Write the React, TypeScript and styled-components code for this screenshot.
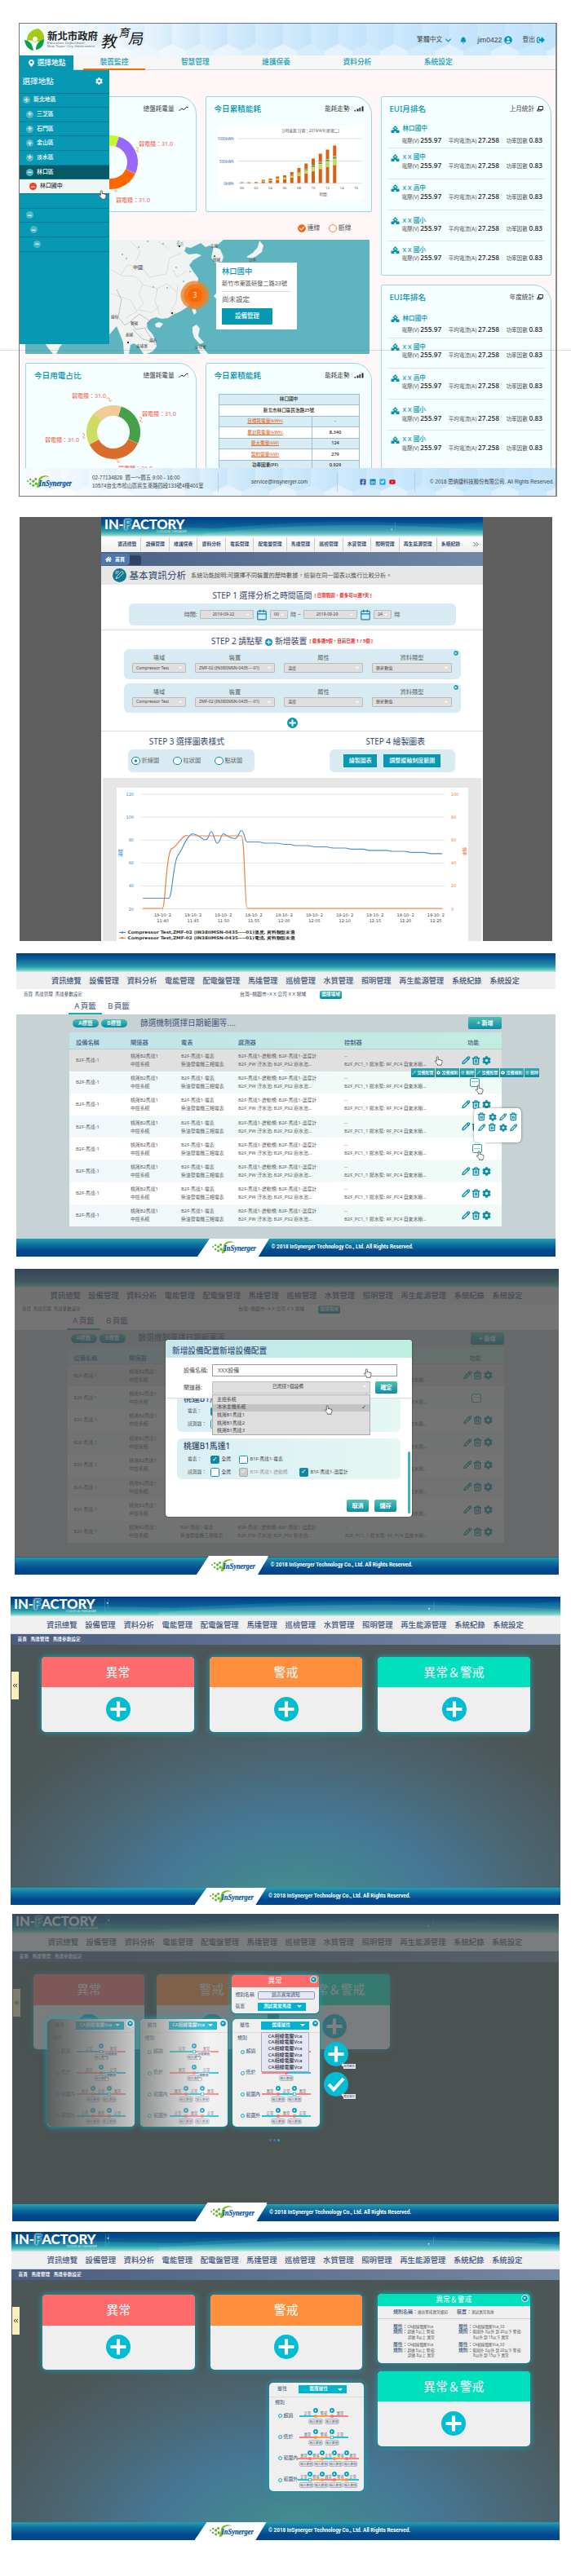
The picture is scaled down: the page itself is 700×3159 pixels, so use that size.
import React from 'react';
import styled, { createGlobalStyle, css } from 'styled-components';
import { FaCog, FaBell, FaUserCircle, FaFacebookSquare, FaLinkedin, FaTwitterSquare, FaYoutube, FaHome, FaCheckCircle, FaMapMarkerAlt, FaSignOutAlt } from 'react-icons/fa';
import { Pencil, Trash2, ChevronDown, ChevronsRight, ChevronsLeft, Calendar } from 'lucide-react';

const sans = '"Noto Sans", "Noto Sans CJK TC", sans-serif';

const Global = createGlobalStyle`
  *{box-sizing:border-box}
  html,body{margin:0;background:#fff}
  body{font-family:${sans};line-height:1;color:#444}
`;

const Page = styled.main`
  position:relative;width:700px;height:3159px;overflow:hidden;padding-top:28px;
`;
const PageRule = styled.div`position:absolute;left:0;top:429px;width:700px;height:1px;background:rgba(120,120,120,.25);`;

const Frame = styled.section<{ $x: number; $w: number; $h: number; $mt: number }>`
  position:relative;display:flex;flex-direction:column;overflow:hidden;
  margin:${p => p.$mt}px 0 0 ${p => p.$x}px;width:${p => p.$w}px;height:${p => p.$h}px;
`;

/* ---------- shared drawings ---------- */
const Hand = ({ size = 12 }: { size?: number }) => (
  <svg width={size} height={size * 1.1} viewBox="0 0 20 22">
    <path d="M6 12V3.2a1.8 1.8 0 0 1 3.6 0V9c.5-1.4 3-1.3 3.1.3.6-1.2 2.8-.9 2.9.6.8-.8 2.6-.4 2.6 1.3 0 4-.5 5-1.8 7v2.3H8.2v-2C6 16.500 4 14.500 2.600 12.600c-.8-1.500 1-2.800 2.200-1.600z" fill="#fff" stroke="#333" strokeWidth="1.300" strokeLinejoin="round" />
  </svg>
);
const BrandSvg = ({ w }: { w: number }) => (
  <svg width={w} height={w * 0.32} viewBox="0 0 56 18" overflow="visible">
    <g fill="#5cb531">
      {[[2, 8, 1], [5, 6, 1.2], [5, 11, 1.2], [8.500, 8, 1.600], [8.500, 13, 1.500], [11.500, 5.500, 1.500], [12, 11, 1.700]].map((d, i) => <circle key={i} cx={d[0]} cy={d[1]} r={d[2]} />)}
    </g>
    <path d="M29 3C24-.5 15 1.500 15 7c0 3.500-2.500 6-2 9 5 .5 5.500-6 4-9C18 3.500 24 1.500 29 3z" fill="#78be20" />
    <text x="15.500" y="13.500" fontFamily="Liberation Serif, serif" fontStyle="italic" fontWeight="700" fontSize="9.400" textLength="39.500" lengthAdjust="spacingAndGlyphs" fill="#0b57a4" stroke="#0b57a4" strokeWidth=".25">InSynerger</text>
  </svg>
);
const HexBand = ({ h }: { h: number }) => (
  <svg width="657" height={h} viewBox={`0 0 657 ${h}`} style={{ display: 'block' }}>
    <defs>
      <linearGradient id={`base${h}`}><stop offset="0" stopColor="#eef6fc" /><stop offset=".5" stopColor="#d7edfc" /><stop offset="1" stopColor="#c9e8ff" /></linearGradient>
      <linearGradient id={`hex${h}`}><stop offset="0" stopColor="#b5dcf8" stopOpacity=".12" /><stop offset="1" stopColor="#b5dcf8" stopOpacity=".55" /></linearGradient>
      <linearGradient id={`fade${h}`}><stop offset="0" stopColor="#fff" stopOpacity=".8" /><stop offset=".4" stopColor="#fff" stopOpacity="0" /></linearGradient>
    </defs>
    <rect width="657" height={h} fill={`url(#base${h})`} />
    {Array.from({ length: 21 }, (_, i) => (
      <g key={i} fill={`url(#hex${h})`}>
        <path d={`M${i * 34 - 17} 0h34V${h * 0.64}l-17 ${h * 0.2}l-17 -${h * 0.2}z`} />
        {i % 2 ? <path d={`M${i * 34} ${h}v-5l17-9 17 9v5z`} fill="#fff" opacity=".35" /> : null}
      </g>
    ))}
    <rect width="657" height={h} fill={`url(#fade${h})`} />
  </svg>
);

/* ---------- 1. dashboard ---------- */
const Dash = styled(Frame)`background:#fff7f7;border:1px solid #777;border-right:2px solid #888;`;
const Stack = styled.div`display:grid;flex:none;>*{grid-area:1/1;}`;
const DashHead = styled.div`display:flex;align-items:center;height:38px;padding:2px 13px 0 6px;position:relative;`;
const CityName = styled.div`
  width:63px;margin-left:3px;margin-right:4px;color:#222;
  b{display:block;font-size:12.400px;font-weight:700;}
  small{display:block;font-family:"Liberation Sans",sans-serif;font-size:3.900px;line-height:4.200px;white-space:nowrap;letter-spacing:.35px;color:#555}
`;
const Brush = styled.div`
  display:flex;width:56px;font-weight:400;color:#111;transform:skewX(-12deg);
  span:nth-child(1){font-size:19.500px;margin-top:4px}
  span:nth-child(2){font-size:13.500px;margin-top:-3px}
  span:nth-child(3){font-size:18px;margin-top:1px}
`;
const UserTools = styled.div`
  margin-left:auto;display:flex;align-items:center;font-size:7.800px;color:#444;
  svg{color:#0494ad}
  span{margin-right:2px}
  b{font:8.600px "Liberation Sans",sans-serif;margin-right:3px}
`;
const DashNav = styled.nav`
  display:grid;flex:none;grid-template-columns:66px 12px repeat(5,76px);column-gap:0;height:18px;background:#f6f6f6;border-bottom:1px solid #d5d5d5;
  font-size:8.700px;font-weight:500;color:#15a0b5;
`;
const DashTab = styled.span<{ $on?: boolean; $shift?: number }>`
  display:flex;align-items:center;justify-content:center;height:18px;transform:translateX(${p => p.$shift || 0}px);
  border-bottom:2px solid ${p => (p.$on ? '#ff6a00' : 'transparent')};
`;
const PlaceTab = styled(DashTab)`background:#0799b3;color:#fff;border:0;gap:3px;`;
const DashBody = styled.div`
  display:grid;grid-template-columns:209.500px 204px 209.500px;column-gap:11px;padding:32px 0 0 7px;flex:1;min-height:0;align-content:start;overflow:hidden;
`;
const LeftCols = styled.div`grid-column:1/3;display:flex;flex-direction:column;`;
const RightCol = styled.div`display:flex;flex-direction:column;gap:10.500px;`;
const Duo = styled.div`display:grid;grid-template-columns:209.500px 204px;column-gap:11px;`;
const Card = styled.article<{ $h: number }>`
  height:${p => p.$h}px;background:#f6ffff;border:1.500px solid #9cd6de;border-radius:2px 22px 2px 2px;overflow:hidden;
`;
const CardHead = styled.header`
  display:flex;align-items:center;justify-content:space-between;height:30px;padding:0 9px 0 10px;font-size:7.600px;color:#444;
  h3{margin:0;font-size:9.600px;font-weight:500;color:#0494ad}
  svg{margin-left:3px;vertical-align:-1px}
`;
const School = styled.div<{ $h: number }>`
  height:${p => p.$h}px;margin:0 7px;padding:0 0 0 4px;border-bottom:1px solid #dde5e8;
  &:last-child{border:0}
`;
const SchoolName = styled.div<{ $mt: number }>`display:flex;align-items:center;gap:4px;font-size:7.600px;font-weight:500;color:#0494ad;height:10px;position:relative;top:${p => p.$mt}px;margin-bottom:${p => p.$mt}px;`;
const Metrics = styled.div`
  display:flex;justify-content:space-between;align-items:center;margin:4px 3px 0 14px;font-size:6.600px;color:#555;white-space:nowrap;height:10px;
  b{font-weight:500;font-size:8.300px;color:#222}
`;
const MapKey = styled.div`
  display:flex;align-items:center;justify-content:flex-end;height:34px;padding:6px 25px 0 0;font-size:7.700px;gap:2px;color:#555;
  i{width:10px;height:10px;border:1px solid #ff7d2b;border-radius:50%;background:#fff;margin-left:9px}
`;
const MapBox = styled.div`position:relative;height:140px;width:422px;svg{display:block}`;
const Place = styled.div`
  position:absolute;left:234px;top:28px;width:99px;height:82px;background:#fff;padding:6px 7px;font-size:7.200px;color:#555;white-space:nowrap;box-shadow:0 0 1px #999;
  h4{margin:0 0 7px;font-size:9.300px;font-weight:500;color:#0494ad}
  hr{border:0;border-top:1px solid #ddd;margin:5px 0 5px}
  p{margin:0;font-size:8.500px}
  &:before{content:'';position:absolute;left:-3px;top:38px;border:3px solid transparent;border-left:0;border-right-color:#fff}
`;
const Button = styled.span<{ $w: number; $h: number; $fs: number }>`
  display:flex;align-items:center;justify-content:center;flex:none;width:${p => p.$w}px;height:${p => p.$h}px;font-size:${p => p.$fs}px;
  background:#0799b3;color:#fff;font-weight:500;white-space:nowrap;
`;
const MapButton = styled(Button)`margin-top:7px;`;
const UsageTable = styled.table`
  width:173px;margin:7px 0 0 15px;border-collapse:collapse;font-size:5.600px;font-weight:500;text-align:center;color:#222;
  td{height:13.450px;padding:0;border:1px solid #9bc0d6}
  tr:nth-child(odd){background:#d7edf3} tr:nth-child(even){background:#fff}
  a{color:#e2703a;text-decoration:underline}
`;
const SideMenu = styled.aside`
  position:absolute;left:0;top:57px;width:110px;height:336px;background:#0799b3;color:#fff;
`;
const SideTitle = styled.div`display:flex;align-items:center;justify-content:space-between;height:28.500px;padding:0 8px 0 3.500px;font-size:9.600px;border-bottom:1px solid #067a91;`;
const SideRow = styled.div<{ $in: number; $kind?: string }>`
  display:flex;align-items:center;gap:4px;height:17.650px;padding-left:${p => p.$in}px;font-size:6.900px;font-weight:500;border-bottom:1px solid #067a91;
  ${p => p.$kind === 'dark' && css`background:#065a66;`}
  ${p => p.$kind === 'pick' && css`background:#eef6f7;color:#333;`}
`;
const Knob = styled.i<{ $red?: boolean }>`
  display:flex;align-items:center;justify-content:center;width:9px;height:9px;border-radius:50%;font:700 9px/8px "Liberation Sans",sans-serif;
  background:${p => (p.$red ? '#e8412c' : '#4fb7c8')};color:#fff;
`;
const SideHand = styled.span`position:absolute;left:96px;top:145px;`;
const DashFoot = styled.footer`
  display:grid;grid-template-columns:81px 163px 146px 95px 1fr;align-items:center;height:34px;font:6.300px/10px "Liberation Sans","Noto Sans CJK TC",sans-serif;color:#444;
`;
const FootCell = styled.div<{ $pl: number; $line?: boolean }>`
  display:flex;align-items:center;height:24px;padding-left:${p => p.$pl}px;gap:4px;white-space:nowrap;
  ${p => p.$line && css`border-right:1px solid #b8cfdf;`}
`;

const Donut = ({ cx, cy, cols }: { cx: number; cy: number; cols: string[] }) => {
  const spans = [[17, 98], [115, 128], [243, 72], [315, 62]];
  return (
    <g fill="none" strokeWidth="13">
      {spans.map((s, i) => <circle key={i} cx={cx} cy={cy} r="26.500" stroke={cols[i]} pathLength={360} strokeDasharray={`${s[1]} ${360 - s[1]}`} transform={`rotate(${s[0] - 90} ${cx} ${cy})`} />)}
    </g>
  );
};
const Curl = ({ x, y, r = 0 }: { x: number; y: number; r?: number }) => <path d="M0 0c3-1 3 2 1.500 3s-1 3 2 2" transform={`translate(${x} ${y}) rotate(${r})`} fill="none" stroke="#ff8a2b" strokeWidth=".9" />;
const DonutArt = ({ top }: { top?: boolean }) => (
  <svg width="206" height="108" viewBox="0 0 206 108" fontSize="7" fill="#f0604d">
    <Donut cx={top ? 104 : 107} cy={top ? 50 : 54} cols={top ? ['#9a66fb', '#ff6600', '#f7c899', '#c8f72f'] : ['#45a049', '#db6d2c', '#cfdc63', '#f3c995']} />
    {top ? <><text x="138" y="30">弱電類：31.0</text><text x="110" y="99">弱電類：31.0</text><Curl x={135} y={32} /><Curl x={106} y={83} r={-40} /></>
      : <><text x="56" y="12">弱電類：31.0</text><text x="142" y="34">弱電類：31.0</text><text x="23" y="66">弱電類：31.0</text><text x="113" y="101">弱電類：31.0</text><Curl x={99} y={13} r={-40} /><Curl x={139} y={36} /><Curl x={69} y={56} /><Curl x={109} y={88} r={-40} /></>}
  </svg>
);
const barH = [1, 1, 1.5, 4, 5.5, 8, 9.5, 13.5, 18.5, 24, 30, 36, 41, 46];
const BarArt = () => (
  <svg width="178" height="90" viewBox="265.500 154 178 90" fontSize="4.600" fill="#555" style={{ marginLeft: 13, marginTop: 5, display: 'block' }}>
    <rect x="265.500" y="154" width="178" height="90" fill="#fff" />
    <text x="345" y="162">計時能耗 日期：2019/4/9 (星期二)</text>
    {[170, 197.5, 224.7].map(y => <path key={y} d={`M291 ${y}H443`} stroke="#dcdfe4" />)}
    <g fill="#34689c" textAnchor="end"><text x="286" y="172">1000kWh</text><text x="286" y="199.500">500kWh</text><text x="286" y="226.500">0kWh</text></g>
    {barH.map((h, i) => {
      const x = 294 + i * 8.75; const b = 224.5;
      return <g key={i}><rect x={x} y={b - h} width="4" height={h} fill="#dd5f16" /><rect x={x} y={b - h * 0.72} width="4" height={h * 0.24} fill="#fbe3b8" /><rect x={x} y={b - h * 0.7} width="4" height={h * 0.05} fill="#32a852" /><rect x={x} y={b - h * 0.63} width="4" height={h * 0.15} fill="#bfdc52" /></g>;
    })}
    {['00', '02', '04', '06', '08', '10', '12', '14', '16'].map((t, i) => <text key={t} x={296 + i * 17.5} y="232" textAnchor="middle" fontSize="4.300">{t}</text>)}
    <text x="391" y="240">時間</text>
  </svg>
);
const AsiaMap = () => (
  <svg width="422" height="140" viewBox="31 294 422 140">
    <rect x="31" y="294" width="422" height="140" fill="#5fb5bf" />
    <g fill="#f1f2f2">
      <path d="M133 294H274L267 300 262 303 257 301 252 303 246 298 240 301 234 304 228 303 226 308 231 312 241 311 247 313 237 319 232 325 237 333 243 341 242 352 241 362 236 371 229 377 221 382 212 386 206 390 198 391 191 389 185 391 180 396 181 403 187 410 191 418 192 425 187 431 180 434 176 434 170 425 164 421 160 423 158 434 152 434 151 420 147 410 143 400 136 408 133 411z" />
      <path d="M55 421H77L73 426 69 434H65L60 428zM262 302l8 4 4 9-2 6-8 1-5-6z" />
      <path d="M318 295l5 6-2 8-8 6-6 2-5-2 8-5 6-7zM235 379l4-2 2 6-3 3zM190 397l5-2 5 2-4 5-5-1zM236 401l5-3 4 5-2 9 7 8-5 2-7-8-2-7zM240 423l8 2 7 9h-9z" />
    </g>
    <g fill="none" stroke="#c9cdd0" strokeWidth=".6">
      <path d="M135 330l14 8 17 1 9 9-5 13 6 11-8 8M148 337l8-12 18 2 9 13 20-4M175 349l18 5 11-6 12 9M204 336l4-20 15-6M193 354l-3 15 6 17M218 350l-2 20-8 14M160 296l12 12-5 12M207 305l-14-9M136 360l24 8 8 14-14 8M170 380l16 3 10-8M229 332l-12 8-5-9" />
      <path d="M143 355l6 12-4 22 8 10 8-5 5 10 12-2M160 394l11-9 13 9-6 10 13 19M163 404l12 12 14 3" stroke="#888" strokeDasharray="2 .600" />
    </g>
    <g fill="#74bec8">{[[150, 312], [155, 317], [170, 303], [181, 296], [200, 299], [219, 296], [233, 333], [205, 353], [225, 345], [216, 328], [237, 320], [188, 352]].map((d, i) => <circle key={i} cx={d[0]} cy={d[1]} r="1" />)}</g>
    <g fontSize="4.600" fill="#444"><text x="163" y="330" fontSize="6">中國</text><text x="136" y="390">緬甸</text><text x="160" y="398">寮國</text><text x="154" y="412">泰國</text><text x="167" y="426">柬埔寨</text><text x="183" y="419">越南</text><text x="239" y="427">菲律賓</text><text x="305" y="320">日本</text><text x="261" y="320">韓國</text><text x="258" y="303">北韓</text><text x="216" y="301" fill="#2d8d9b">北京</text></g>
    <g fill="#333"><circle cx="220" cy="302" r="1.200" /><circle cx="211" cy="384" r="1.200" /><circle cx="157" cy="420" r="1.200" /><circle cx="263" cy="314" r="1" /></g>
    <circle cx="239" cy="362" r="17.500" fill="#e9842f" opacity=".8" /><circle cx="239" cy="362" r="13.500" fill="#f27a1f" /><circle cx="239" cy="362" r="9" fill="#ff6600" />
    <text x="239" y="364.500" fontSize="8.500" fill="#fff" textAnchor="middle">3</text>
  </svg>
);
const SchoolIcon = () => <svg width="11" height="9" viewBox="0 0 22 18" fill="#0494ad"><path d="M11 0l7 8h-3v3h6v7h-8v-4H9v4H1v-7h6V8H4zM11 4.500a2 2 0 1 0 0 4 2 2 0 0 0 0-4z" fillRule="evenodd" /></svg>;
const schools = ['林口國中', 'X X 國中', 'X X 高中', 'X X 國小', 'X X 國小'];
const drops = [0, 6, 6, 8, 6];
const Gap = styled.div<{ $h: number }>`height:${p => p.$h}px;flex:none;`;
const Ranking = ({ title, note, h, top }: { title: string; note: string; h: number; top: number }) => (
  <Card $h={h}>
    <CardHead><h3>{title}</h3><span>{note}<svg width="8" height="7" viewBox="0 0 16 14" fill="none" stroke="#333" strokeWidth="2"><path d="M5 1h10v8H5zM4 5L1 12h10l2-3" /></svg></span></CardHead>
    <Gap $h={top} />
    {schools.map((s, i) => (
      <School key={i} $h={i ? 37.900 : 29}>
        <SchoolName $mt={drops[i]}><SchoolIcon />{s}</SchoolName>
        <Metrics><span>電壓(V) <b>255.97</b></span><span>平均電流(A) <b>27.258</b></span><span>功率因數 <b>0.83</b></span></Metrics>
      </School>
    ))}
  </Card>
);
const TrendIcon = () => <svg width="12" height="7" viewBox="0 0 24 14" fill="none" stroke="#222" strokeWidth="2"><path d="M1 12l6-6 6 3 6-6h4" /></svg>;
const BarsIcon = () => <svg width="12" height="7" viewBox="0 0 24 14" fill="#222"><path d="M1 10h3v3H1zM7 7h4v6H7zM13 4h3v9h-3zM19 1h4v12h-4z" /></svg>;

const Dashboard = () => (
  <Dash $x={23} $w={660} $h={581} $mt={0}>
    <Stack>
      <HexBand h={39} />
      <DashHead>
        <svg width="25" height="28" viewBox="0 0 25 28"><path d="M3 15C3 5 10 1 17 0c8 5 9 13 4 19-2-3-6-4-8-2-3-3-7-3-10-2z" fill="#a5cc12" /><path d="M0 14c7 1 10 6 11 13-6-1-10-6-11-13zM24 13c-7 2-10 7-10 13 7-1 10-6 10-13z" fill="#0a9f49" /><circle cx="13" cy="13" r="3" fill="#fff" /></svg>
        <CityName><b>新北市政府</b><small>Education Department<br />New Taipei City Government</small></CityName>
        <Brush><span>教</span><span>育</span><span>局</span></Brush>
        <UserTools>
          <span>繁體中文</span><ChevronDown size={11} strokeWidth={3} />
          <FaBell size={8} style={{ marginLeft: 9, marginRight: 13 }} />
          <b>jim0422</b><FaUserCircle size={10} style={{ marginRight: 12 }} />
          <span>登出</span><FaSignOutAlt size={10} />
        </UserTools>
      </DashHead>
    </Stack>
    <DashNav>
      <PlaceTab><FaMapMarkerAlt size={9} />選擇地點</PlaceTab><span />
      <DashTab $on>裝置監控</DashTab>
      {['智慧管理', '維護保養', '資料分析', '系統設定'].map((t, i) => <DashTab key={t} $shift={(i + 1) * 23.3}>{t}</DashTab>)}
    </DashNav>
    <DashBody>
      <LeftCols>
        <Duo>
          <Card $h={142}><CardHead><h3>今日用電占比</h3><span>總盤耗電量 <TrendIcon /></span></CardHead><DonutArt top /></Card>
          <Card $h={142}><CardHead><h3>今日累積能耗</h3><span>能耗走勢 <BarsIcon /></span></CardHead><BarArt /></Card>
        </Duo>
        <MapKey><FaCheckCircle size={10} color="#f7640d" />連線<i />斷線</MapKey>
        <MapBox>
          <AsiaMap />
          <Place><h4>林口國中</h4>新竹市東區研發二路23號<hr /><p>尚未設定</p><MapButton $w={62} $h={20} $fs={7.5}>設備管理</MapButton></Place>
        </MapBox>
        <Gap $h={11} />
        <Duo>
          <Card $h={140}><CardHead><h3>今日用電占比</h3><span>總盤耗電量 <TrendIcon /></span></CardHead><DonutArt /></Card>
          <Card $h={140}>
            <CardHead><h3>今日累積能耗</h3><span>能耗走勢 <BarsIcon /></span></CardHead>
            <UsageTable><tbody>
              <tr><td colSpan={2}>林口國中</td></tr>
              <tr><td colSpan={2}>新北市林口區民治路25號</td></tr>
              <tr><td style={{ width: 114 }}><a>目標耗電量(kWh)</a></td><td>-</td></tr>
              <tr><td><a>累計耗電量(kWh)</a></td><td>8,340</td></tr>
              <tr><td><a>最大需量(kW)</a></td><td>124</td></tr>
              <tr><td><a>契約容量(kW)</a></td><td>279</td></tr>
              <tr><td>功率因素(PF)</td><td>0.929</td></tr>
            </tbody></UsageTable>
          </Card>
        </Duo>
      </LeftCols>
      <RightCol>
        <Ranking title="EUI月排名" note="上月統計" h={220} top={4} />
        <Ranking title="EUI年排名" note="年度統計" h={227} top={6} />
      </RightCol>
    </DashBody>
    <Stack>
      <HexBand h={34} />
      <DashFoot>
        <FootCell $pl={8}><BrandSvg w={57} /></FootCell>
        <FootCell $pl={8} $line><div>02-77134828&nbsp; 週一～週五 9:00 - 16:00<br />10574台北市松山區民生東路四段133號4樓401室</div></FootCell>
        <FootCell $pl={40} $line>service@insynerger.com</FootCell>
        <FootCell $pl={27} $line><FaFacebookSquare size={8} color="#3b5998" /><FaLinkedin size={8} color="#0a7bb5" /><FaTwitterSquare size={8} color="#1da1f2" /><FaYoutube size={8} color="#e11" /></FootCell>
        <FootCell $pl={18}>© 2018 思納捷科技股份有限公司. All Rights Reserved.</FootCell>
      </DashFoot>
    </Stack>
    <SideMenu>
      <SideTitle>選擇地點<FaCog size={9} /></SideTitle>
      <SideRow $in={4}><Knob>+</Knob>新北地區</SideRow>
      {['三芝區', '石門區', '金山區', '淡水區'].map(t => <SideRow key={t} $in={8}><Knob>+</Knob>{t}</SideRow>)}
      <SideRow $in={8} $kind="dark"><Knob>−</Knob>林口區</SideRow>
      <SideRow $in={12} $kind="pick"><Knob $red>−</Knob>林口國中</SideRow>
      <SideRow $in={8} />
      <SideRow $in={8}><Knob>−</Knob></SideRow>
      <SideRow $in={12.500}><Knob>−</Knob></SideRow>
      <SideRow $in={17}><Knob>−</Knob></SideRow>
      <SideHand><Hand size={11} /></SideHand>
    </SideMenu>
  </Dash>
);

/* ---------- shared factory chrome ---------- */
const TopBand = styled.div<{ $h: number }>`
  position:relative;flex:none;height:${p => p.$h}px;overflow:hidden;
  background:linear-gradient(#003f85 0,#0d5f98 30%,#2193ac 68%,#62c4bd 88%,#c5efe6 100%);
  >svg{position:absolute;inset:0;width:100%;height:100%}
`;
const FactoryLogo = styled.div<{ $fs: number; $x: number; $w: number }>`
  position:relative;width:${p => p.$w}px;margin:3px 0 0 ${p => p.$x}px;font-family:Lato,sans-serif;font-weight:900;font-size:${p => p.$fs}px;color:#fff;white-space:nowrap;display:flex;align-items:center;line-height:12px;letter-spacing:-.1px;
  em{font-style:normal;color:#168fae;text-shadow:0 0 2px #fff,0 0 1px #fff,0 0 3px #fff}
  small{position:absolute;right:2px;top:13px;font-size:3.800px;line-height:4px;font-weight:400;letter-spacing:0;color:#cfe9ee}
`;
const Swoosh = () => (
  <svg viewBox="0 0 670 24" preserveAspectRatio="none">
    <path d="M200 14Q400 2 500 6T670 6V0H0V10z" fill="#003a84" opacity=".35" /><path d="M180 20Q420 2 670 16V24H180z" fill="#fff" opacity=".12" />
    <path d="M115 2v18M119 2v12l-4 4M510 18h6V6" stroke="#6cc5d4" strokeWidth=".5" fill="none" opacity=".7" />
    <circle cx="118" cy="8" r="1" fill="#bfe8ee" /><circle cx="510" cy="15" r="1" fill="#bfe8ee" />
  </svg>
);
const Logo = ({ x = 4, w = 102, fs = 16.5 }: { x?: number; w?: number; fs?: number }) => <FactoryLogo $x={x} $w={w} $fs={fs}>IN-<em>F</em>ACTORY<small>CLOUD AI MANAGER</small></FactoryLogo>;

const NavBar = styled.nav<{ $l: number; $w: number; $h: number; $fs: number }>`
  flex:none;background:#f0f0f0;height:${p => p.$h}px;
  >div{display:flex;align-items:center;justify-content:space-between;height:100%;margin-left:${p => p.$l}px;width:${p => p.$w}px;font-size:${p => p.$fs}px;font-weight:500;color:#40567b;white-space:nowrap}
`;
const menu = ['資訊總覽', '設備管理', '資料分析', '電能管理', '配電盤管理', '馬達管理', '巡檢管理', '水質管理', '照明管理', '再生能源管理', '系統紀錄', '系統設定'];
const MainNav = ({ l, w, h, fs }: { l: number; w: number; h: number; fs: number }) => <NavBar $l={l} $w={w} $h={h} $fs={fs}><div>{menu.map(m => <span key={m}>{m}</span>)}</div></NavBar>;

const FootBand = styled.footer<{ $h: number; $l: number }>`
  position:relative;flex:none;display:flex;align-items:center;height:${p => p.$h}px;margin-top:auto;padding-left:${p => p.$l}px;
  background:linear-gradient(#24a0b4 0,#0d6c9f 35%,#03478c 70%,#03458a 100%);
`;
const FootLogo = styled.div<{ $h?: number }>`width:88px;height:${p => (p.$h ? p.$h + 'px' : '100%')};background:#fff;clip-path:polygon(17% 0,100% 0,85% 100%,0 100%);display:flex;align-items:center;padding-left:17px;`;
const FootText = styled.span`font:700 6.400px/8px Roboto,sans-serif;color:#fff;white-space:nowrap;margin:0 0 2px 2.500px;`;
const Foot = ({ h, l }: { h: number; l: number }) => (
  <FootBand $h={h} $l={l}><FootLogo><BrandSvg w={56} /></FootLogo><FootText>© 2018 InSynerger Technology Co., Ltd. All Rights Reserved.</FootText></FootBand>
);

/* ---------- 2. data analysis ---------- */
const Analysis = styled(Frame)`background:#5e5e5e;padding-left:100px;`;
const Sheet = styled.div`width:468px;height:100%;background:#fff;display:flex;flex-direction:column;>*{flex-shrink:0}`;
const SmallNav = styled.nav`
  display:flex;align-items:center;height:19px;padding-left:15px;background:linear-gradient(#fff,#efefef);font-size:5.800px;font-weight:700;color:#3c4f74;white-space:nowrap;
  span{padding:4px 5.150px;border-right:1px solid #ccc;line-height:9px}
  span:last-of-type{border:0}
  svg{margin-left:auto;margin-right:3px}
`;
const CrumbBar = styled.div`height:17px;background:linear-gradient(90deg,#4a6285,#7187a5);display:flex;align-items:center;`;
const HomeTab = styled.div`
  display:flex;align-items:center;gap:4px;width:35px;height:14px;padding-left:5px;background:#4f79ad;color:#fff;font-size:6px;font-weight:700;border-radius:0 4px 4px 0;box-shadow:15px 1px 0 -1px #32435f;
`;
const TitleStrip = styled.div`
  display:flex;align-items:center;height:23px;padding-left:13.500px;background:#e7e7e7;color:#555;font-size:7.200px;gap:4px;white-space:nowrap;
  h2{margin:0 2px 0 0;font-size:11.600px;font-weight:400;color:#2d4470}
`;
const StepTitle = styled.h3<{ $mt?: number; $pr?: number; $pl?: number }>`
  margin:${p => p.$mt || 0}px 0 0;padding:0 ${p => p.$pr || 0}px 0 ${p => p.$pl || 0}px;display:flex;align-items:center;justify-content:center;gap:3px;height:18px;font-size:9.900px;font-weight:400;color:#33466d;white-space:nowrap;
  small{font-size:5.500px;font-weight:700;color:#f02a2a}
`;
const Pad = styled.div<{ $w: number; $h: number; $gap?: number }>`
  display:flex;align-items:center;justify-content:center;width:${p => p.$w}px;height:${p => p.$h}px;margin:0 auto;background:#d8ebf2;border-radius:6px;font-size:7.200px;color:#666;gap:${p => p.$gap || 4}px;position:relative;
`;
const Select = styled.span<{ $w?: number; $h?: number; $left?: boolean; $fs?: number }>`
  position:relative;display:flex;align-items:center;justify-content:${p => (p.$left ? 'flex-start' : 'center')};width:${p => (p.$w ? p.$w + 'px' : '100%')};height:${p => p.$h || 12}px;padding:0 12px 0 4px;
  background:#dfdfdf;border:1px solid #bbb;border-radius:1px;font-size:${p => p.$fs || 5.1}px;color:#444;white-space:nowrap;
  &:after{content:'';position:absolute;right:4px;top:4px;border:2px solid transparent;border-top:2.500px solid #fff}
`;
const Device = styled(Pad)`
  display:grid;grid-template-columns:66px 98px 97px 98px;column-gap:11px;justify-content:center;align-content:center;row-gap:3px;text-align:center;
`;
const CloseDot = styled.i<{ $s?: number }>`
  position:absolute;right:2px;top:1px;width:${p => p.$s || 8}px;height:${p => p.$s || 8}px;border-radius:50%;background:#0b94b4;border:1px solid #fff;color:#fff;font:700 6px/${p => (p.$s || 8) - 2}px "Liberation Sans",sans-serif;text-align:center;
`;
const PlusDot = ({ s, c = '#0d93bb' }: { s: number; c?: string }) => <svg width={s} height={s} viewBox="0 0 30 30"><circle cx="15" cy="15" r="15" fill={c} /><path d="M15 5.500v19M5.500 15h19" stroke="#fff" strokeWidth="4.200" /></svg>;
const Line = styled.div<{ $mt?: number }>`height:1px;background:#ddd;flex:none;margin-top:${p => p.$mt || 0}px;`;
const AddDevice = styled.div`text-align:center;height:22px;padding-top:5px;`;
const Halves = styled.div`display:flex;justify-content:space-between;padding:4px 34px 7.500px 33px;`;
const Opt = styled.span<{ $on?: boolean }>`
  display:flex;align-items:center;gap:2px;width:45px;
  &:before{content:'';width:8.500px;height:8.500px;border-radius:50%;border:1.500px solid #0b86b0;background:${p => (p.$on ? 'radial-gradient(#0b86b0 0 1.500px,#fff 2px)' : '#fff')}}
`;
const ChartArea = styled.div`flex:1 1 0;background:#e6e6e6;margin:0 2px;padding:11.500px 17px 0;min-height:0;overflow:hidden;`;
const ticks = ['11:40', '11:45', '11:50', '11:55', '12:00', '12:05', '12:10', '12:15', '12:20', '12:25'];
const LineArt = () => (
  <svg width="431" height="188" viewBox="143 967 431 188" fontFamily="DejaVu Sans, sans-serif" fontSize="5" style={{ display: 'block', background: '#fff' }}>
    {[0, 1, 2, 3, 4, 5].map(i => <g key={i}><path d={`M172 ${975 + i * 28.1}H545`} stroke="#ddd" strokeWidth=".8" /><text x="164" y={977 + i * 28.1} textAnchor="end" fill="#3b87cf">{120 - i * 20}</text><text x="553" y={977 + i * 28.1} fill="#ea7a35">{100 - i * 20}</text></g>)}
    {ticks.map((t, i) => <g key={t} textAnchor="middle" fill="#444"><path d={`M${199.500 + i * 37.200} 1115v3`} stroke="#ccc" strokeWidth=".600" /><text x={199.5 + i * 37.200} y="1124.500">19-10- 2</text><text x={199.5 + i * 37.200} y="1131.500">{t}</text></g>)}
    <g fontFamily="Noto Sans CJK TC, sans-serif" fontWeight="500"><text transform="rotate(-90 149 1052)" x="149" y="1052" fill="#3b87cf">溫度</text><text transform="rotate(90 568 1040)" x="568" y="1040" fill="#ea7a35">頻率</text></g>
    <path d="M175 1102.500H207C211 1102.500 212 1060 218 1050C224 1043 228 1026 236 1023.500C243 1024 248 1031 252 1031C256 1031 256 1021 259 1021S263 1035 266.500 1035S271 1023 274 1023.500C280 1026 282 1029.500 288 1029.500C292 1029.500 293 1020 296 1019.500C300 1020 300 1034 303 1033.500H318L324 1035H340L348 1036.500H356L362 1038H378L386 1039.500H400L408 1041H424L430 1042.300H446L452 1043.800H474L480 1045H496L504 1046.300H520L528 1047.800H542" fill="none" stroke="#4d90cd" strokeWidth="1.200" />
    <path d="M175 1115H199C203 1115 203 1050 210 1042C218 1039 222 1025 230 1025.500L246 1026H296C300 1026 300 1115 303 1115H542" fill="none" stroke="#ea8147" strokeWidth="1.200" />
    {['溫度, 資料類型未選', '電流, 資料類型未選'].map((t, i) => <g key={t}><path d={`M146 ${1144.500 + i * 6.800}h8`} stroke={i ? '#ea7a35' : '#3b87cf'} /><circle cx="150" cy={1144.5 + i * 6.8} r="1.300" fill={i ? '#ea7a35' : '#3b87cf'} /><text x="156.500" y={1146.2 + i * 6.8} fontWeight="700" fill="#333" textLength="205" lengthAdjust="spacingAndGlyphs">Compressor Test,ZMF-02 (IN38IIMSN-0435----01){t}</text></g>)}
  </svg>
);
const DeviceRow = () => (
  <Device $w={413} $h={36.5}>
    <span>場域</span><span>裝置</span><span>屬性</span><span>資料類型</span>
    <Select $left>Compressor Test</Select><Select $left>ZMF-02 (IN38IIMSN-0435----01)</Select><Select $left>溫度</Select><Select $left>歷史數值</Select>
    <CloseDot>×</CloseDot>
  </Device>
);
const AnalysisScreen = () => (
  <Analysis $x={24} $w={653} $h={520.5} $mt={24.5}>
    <Sheet>
      <TopBand $h={24.5}><Swoosh /><Logo x={4} w={103} fs={16.5} /></TopBand>
      <SmallNav>{['資訊總覽', '設備管理', '維護保養', '資料分析', '電能管理', '配電盤管理', '馬達管理', '巡檢管理', '水質管理', '照明管理', '再生能源管理', '系統紀錄'].map(t => <span key={t}>{t}</span>)}<ChevronsRight size={11} /></SmallNav>
      <CrumbBar><HomeTab><FaHome size={8} />首頁</HomeTab></CrumbBar>
      <TitleStrip>
        <svg width="17" height="17" viewBox="0 0 34 34"><circle cx="17" cy="17" r="17" fill="#17768f" /><path d="M8 25l3-6L23 7l4 4-12 12-7 2zM7 8h9M7 12h6" stroke="#d5eef3" strokeWidth="1.800" fill="none" /></svg>
        <h2>基本資訊分析</h2>系統功能說明:可選擇不同裝置的歷時數據，繪製在同一圖表以進行比較分析。
      </TitleStrip>
      <StepTitle $mt={5}>STEP 1 選擇分析之時間區間<small>[ 日期範圍，最多可以選7天 ]</small></StepTitle>
      <Pad $w={401} $h={27} $gap={3}>時間: <Select $w={66} $h={11.5}>2019-09-22</Select><Calendar size={14} color="#0d86ae" /><Select $w={22} $h={11.5} $left>00</Select>時 ~<Select $w={66} $h={11.5}>2019-09-29</Select><Calendar size={14} color="#0d86ae" /><Select $w={22} $h={11.5} $left>24</Select>時</Pad>
      <Line $mt={5} />
      <StepTitle $mt={5}><span>STEP 2 請點擊</span><PlusDot s={9} /><span>新增裝置</span><small>[ 最多選5個，目前已選 1 / 5個 ]</small></StepTitle>
      <DeviceRow /><Gap $h={5} /><DeviceRow />
      <AddDevice><PlusDot s={13} /></AddDevice>
      <Line />
      <Halves>
        <div><StepTitle $pr={11}>STEP 3 選擇圖表樣式</StepTitle><Pad $w={155} $h={27.5} $gap={6}><Opt $on>折線圖</Opt><Opt>柱狀圖</Opt><Opt>點狀圖</Opt></Pad></div>
        <div><StepTitle $pl={8}>STEP 4 繪製圖表</StepTitle><Pad $w={154.5} $h={27.5} $gap={8}><Button $w={41} $h={15.5} $fs={7}>繪製圖表</Button><Button $w={70} $h={15.5} $fs={7}>調整縱軸刻度範圍</Button></Pad></div>
      </Halves>
      <ChartArea><LineArt /></ChartArea>
    </Sheet>
  </Analysis>
);

/* ---------- 3 & 4. equipment table ---------- */
const Equip = styled(Frame)`background:#c7d2d4;`;
const TopInfo = styled.div`
  display:flex;align-items:center;height:13px;background:#fff;font-size:5.500px;color:#3c4a66;white-space:nowrap;padding-left:9px;flex:none;
  span:nth-child(1){width:265px} span:nth-child(2){width:98px;font-size:5.900px}
`;
const Mini = styled.b`display:flex;align-items:center;justify-content:center;width:27px;height:10px;border-radius:2px;background:linear-gradient(#3cb9b0,#0d8ba5);color:#fff;font-size:5.700px;font-weight:500;`;
const Tabs = styled.div`display:flex;align-items:flex-end;height:18px;padding-left:64px;background:#fff;font-size:9.500px;color:#40567b;flex:none;`;
const Tab = styled.span<{ $on?: boolean }>`width:41px;text-align:center;padding-bottom:4px;border-bottom:2px solid ${p => (p.$on ? '#23a9ac' : 'transparent')};white-space:nowrap;word-spacing:-1px;`;
const Filter = styled.div`display:flex;align-items:center;gap:3px;height:21.500px;padding:0 0 0 4px;font-size:9.700px;color:#40567b;white-space:nowrap;`;
const FilterNote = styled.span`margin-left:13px;flex:1;`;
const Pill = styled.b`width:32px;height:10.500px;border-radius:6px;background:linear-gradient(#45bfb2,#0b8aa4);color:#fff;font-size:6.500px;font-weight:500;display:flex;align-items:center;justify-content:center;`;
const AddBtn = styled.b<{ $w?: number; $ml?: number }>`width:${p => p.$w || 41}px;margin-left:${p => p.$ml || 0}px;height:15px;border-radius:2px;background:linear-gradient(#4fc4b4,#0d8ca6);color:#fff;font-size:7px;font-weight:700;display:flex;align-items:center;justify-content:center;`;
const TableBox = styled.div<{ $w: number; $ml: number }>`width:${p => p.$w}px;margin-left:${p => p.$ml}px;flex:none;`;
const Row = styled.div<{ $h: number; $bg: string }>`
  display:grid;grid-template-columns:67fr 62fr 70fr 130fr 144fr 49fr;align-items:center;height:${p => p.$h}px;padding-left:8px;background:${p => p.$bg};
  font-size:5.850px;line-height:10px;color:#606060;white-space:nowrap;
`;
const HeadRow = styled(Row)`font-size:7.200px;font-weight:500;color:#40607f;border-bottom:1px solid #b9cdcf;padding-top:5px;`;
const HeadLast = styled.span`padding-left:7px;`;
const Acts = styled.span`display:flex;align-items:center;gap:1.500px;`;
const ActIcons = () => <Acts><Pencil size={10.5} strokeWidth={3} color="#0d8fa3" /><Trash2 size={11} strokeWidth={3} color="#0d8fa3" /><FaCog size={11} color="#0d8fa3" /></Acts>;
const More = styled.i<{ $ml: number }>`
  display:flex;align-items:center;justify-content:center;width:12px;height:11px;margin-left:${p => p.$ml}px;border:1.300px solid #27a3b0;border-radius:2px;background:#fff;color:#0d8fa3;font:700 8px/4px "Liberation Sans",sans-serif;padding-bottom:4px;
`;
const EquipTable = ({ w, ml, rh, more }: { w: number; ml: number; rh: number; more: number[] }) => (
  <TableBox $w={w} $ml={ml}>
    <Filter><Pill>A標籤</Pill><Pill>B標籤</Pill><FilterNote>篩選機制選擇日期範圍等....</FilterNote><AddBtn>+ 新增</AddBtn></Filter>
    <HeadRow $h={21} $bg="linear-gradient(90deg,#c3e3ea,#c0ede0)"><span>設備名稱</span><span>閘道器</span><span>電表</span><span>感測器</span><span>控制器</span><HeadLast>功能</HeadLast></HeadRow>
    {Array.from({ length: 8 }, (_, i) => (
      <Row key={i} $h={rh} $bg={i === 0 ? '#e1e0e0' : i % 2 ? 'linear-gradient(90deg,#f2f8fb,#f0fbf7)' : '#fff'}>
        <span>B2F-馬達-1</span><span>桃運B2馬達1<br />中控系統</span><span>B2F-馬達1-電表<br />柴油發電機三相電表</span><span>B2F-馬達1-震動規; B2F-馬達1-溫度計<br />B2F_PW 汙水池; B2F_PS2 廢水池...</span><span>--<br />B2F_PC1_1 揚水泵; RF_PC4 自來水箱...</span>
        {more.includes(i) ? <More $ml={i === 4 ? 13 : 10}>…</More> : <ActIcons />}
      </Row>
    ))}
  </TableBox>
);
const Floating = styled.div<{ $x: number; $y: number }>`position:absolute;left:${p => p.$x}px;top:${p => p.$y}px;line-height:0;`;
const Tooltips = styled(Floating)`display:flex;gap:1px;`;
const Tip = styled.b<{ $w: number }>`display:flex;align-items:center;justify-content:center;gap:1px;width:${p => p.$w}px;height:10.500px;background:linear-gradient(#2fa9ad,#0b879f);color:#fff;font-size:5px;font-weight:500;white-space:nowrap;`;
const IconPop = styled(Floating)`
  display:grid;grid-template-columns:repeat(4,13px);grid-auto-rows:13px;align-content:start;justify-items:center;align-items:center;width:58px;height:42px;padding:4px 3px;background:#fff;border-radius:5px;box-shadow:0 0 3px rgba(0,0,0,.5);color:#0d8fa3;
`;
const Notch = styled.i`position:absolute;left:7px;bottom:-4px;border:4px solid transparent;border-top-color:#fff;border-bottom:0;`;
const EquipBase = ({ second }: { second?: boolean }) => (
  <>
    <TopBand $h={second ? 22.5 : 23} />
    <MainNav l={second ? 43.6 : 43} w={second ? 579 : 574} h={21} fs={second ? 9.3 : 9.17} />
    <TopInfo><span>首頁&nbsp; 馬達管理&nbsp; 馬達參數設定</span><span>台灣&gt;桃園市&gt;X X 公司 X X 場域</span><Mini>選擇場域</Mini></TopInfo>
    <Tabs><Tab $on>A 頁籤</Tab><Tab>B 頁籤</Tab></Tabs>
    <EquipTable w={second ? 535.5 : 530} ml={second ? 64.5 : 65} rh={second ? 27.4 : 27.2} more={second ? [1] : [1, 4]} />
  </>
);
const EquipScreen = () => (
  <Equip $x={20} $w={661} $h={372} $mt={15}>
    <EquipBase />
    <Foot h={22} l={222} />
    <Floating $x={512} $y={126}><Hand size={11} /></Floating>
    <Floating $x={321} $y={141}><svg width="7" height="4" viewBox="0 0 7 4"><path d="M0 0h7L3.500 4z" fill="#fff" /></svg></Floating>
    <Tooltips $x={484} $y={141}>{[['設備配置', 29], ['設備規則', 29], ['刪除', 18], ['設備配置', 29], ['設備規則', 29], ['刪除', 18]].map((t, i) => <Tip key={i} $w={t[1] as number}>{i % 3 === 0 ? <Pencil size={5} /> : i % 3 === 1 ? <FaCog size={5} /> : <Trash2 size={5} />}{t[0]}</Tip>)}</Tooltips>
    <Floating $x={562} $y={161}><Hand size={11} /></Floating>
    <Floating $x={563} $y={242}><Hand size={11} /></Floating>
    <IconPop $x={561} $y={190}>
      {[1, 2, 0, 1, 0, 1, 2, 0].map((k, i) => k === 0 ? <Pencil key={i} size={9.5} strokeWidth={3} /> : k === 1 ? <Trash2 key={i} size={10.5} strokeWidth={3} /> : <FaCog key={i} size={10} />)}
      <Notch />
    </IconPop>
  </Equip>
);

const Dimmer = styled.div<{ $b: number; $c: string }>`position:absolute;inset:0 0 ${p => p.$b}px 0;background:${p => p.$c};`;
const Modal = styled.div`
  position:absolute;left:185px;top:87px;width:302px;height:217px;background:#fff;border-radius:4px;overflow:hidden;color:#40567b;display:flex;flex-direction:column;box-shadow:0 0 2px rgba(0,0,0,.6);
`;
const ModalHead = styled.h3`margin:0;height:22px;padding:9px 0 0 8px;font-size:9.700px;font-weight:500;background:linear-gradient(90deg,#c8e5ee,#bdefe0);`;
const Field = styled.div<{ $mt: number }>`display:flex;align-items:center;height:14.500px;margin-top:${p => p.$mt}px;padding-left:22px;font-size:7px;color:#555;`;
const FieldLabel = styled.span`width:35px;white-space:nowrap;`;
const Input = styled.span`display:flex;align-items:center;width:227px;height:14.500px;border:1px solid #999;padding-left:6px;`;
const Group = styled.div<{ $h: number; $mt?: number; $cut?: boolean }>`
  width:274px;height:${p => p.$h}px;margin:${p => p.$mt || 0}px 0 0 14px;padding:${p => (p.$cut ? 0 : 5)}px 8px 0;border-radius:${p => (p.$cut ? '0 0 6px 6px' : '6px')};background:linear-gradient(90deg,#d9eff4,#e4f7f3);overflow:hidden;
  h4{margin:${p => (p.$cut ? -4 : 0)}px 0 ${p => (p.$cut ? 3 : 4)}px;font-size:9.900px;font-weight:500;color:#34466d;}
`;
const Checks = styled.div`display:flex;align-items:center;height:15.500px;font-size:5.800px;color:#555;padding-left:5px;white-space:nowrap;>span:first-child{width:28px}`;
const Check = styled.span<{ $w: number; $s?: 'on' | 'off' }>`
  display:flex;align-items:center;gap:3px;width:${p => p.$w}px;color:${p => (p.$s === 'off' ? '#999' : '#444')};
  &:before{content:'${p => (p.$s ? '✓' : '')}';width:8.500px;height:8.500px;border:1px solid ${p => (p.$s === 'off' ? '#aaa' : '#198fab')};border-radius:1.500px;background:${p => (p.$s === 'on' ? '#0d87a4' : p.$s === 'off' ? '#ccc' : '#fff')};color:#fff;font:700 8px/7px "DejaVu Sans",sans-serif;text-align:center}
`;
const Drop = styled.div`position:absolute;left:57px;top:67px;width:194px;height:50px;padding:1px 0;background:#dedede;border:1px solid #aaa;font-size:5.900px;color:#444;`;
const DropItem = styled.div<{ $on?: boolean }>`display:flex;justify-content:space-between;align-items:center;height:9.600px;padding:0 4px 0 5px;background:${p => (p.$on ? '#c3c3c3' : 'none')};i{font:normal 7px "DejaVu Sans",sans-serif}`;
const ModalBtns = styled.div`display:flex;gap:7px;justify-content:flex-end;padding-right:19px;margin-top:25px;`;
const Scroll = styled.i`position:absolute;right:2px;top:137px;width:3px;height:76px;border-radius:2px;background:#3bb3bd;`;
const ModalScreen = () => (
  <Equip $x={18} $w={666.5} $h={375} $mt={15}>
    <EquipBase second />
    <Foot h={22} l={223} />
    <Dimmer $b={21} $c="rgba(72,72,72,.76)" />
    <Floating $x={223} $y={352}><FootLogo $h={23}><BrandSvg w={56} /></FootLogo></Floating>
    <Modal>
      <ModalHead>新增設備配置新增設備配置</ModalHead>
      <Field $mt={8}><FieldLabel>設備名稱:</FieldLabel><Input>XXX設備</Input></Field>
      <Field $mt={6.5}><FieldLabel>閘道器:</FieldLabel><Select $w={194} $h={14.5} $fs={5.8}>已選擇1個設備</Select><AddBtn $w={27} $ml={6}>確定</AddBtn></Field>
      <Line $mt={5} />
      <Group $h={41} $cut><h4>桃運B1馬達1</h4><Checks><span>電表：</span><Check $w={35} $s="on">全選</Check></Checks><Checks><span>感測器：</span><Check $w={35}>全選</Check></Checks></Group>
      <Group $h={50} $mt={8}>
        <h4>桃運B1馬達1</h4>
        <Checks><span>電表：</span><Check $w={35} $s="on">全選</Check><Check $w={74}>B1F-馬達1-電表</Check></Checks>
        <Checks><span>感測器：</span><Check $w={35}>全選</Check><Check $w={74} $s="off">B1F-馬達1-震動規</Check><Check $w={74} $s="on">B1F-馬達1-溫度計</Check></Checks>
      </Group>
      <ModalBtns><AddBtn $w={27}>取消</AddBtn><AddBtn $w={27}>儲存</AddBtn></ModalBtns>
      <Drop>{['主控系統', '冰水主機系統', '桃運B1馬達1', '桃運B1馬達2', '桃運B1馬達3'].map((t, i) => <DropItem key={t} $on={i === 1}>{t}{i === 1 && <i>✓</i>}</DropItem>)}</Drop>
      <Scroll />
      <Floating $x={242} $y={35}><Hand size={11} /></Floating>
      <Floating $x={194} $y={80}><Hand size={11} /></Floating>
    </Modal>
  </Equip>
);

/* ---------- 5, 6, 7. alert rules ---------- */
const Rules = styled(Frame)<{ $flat?: boolean }>`background:${p => (p.$flat ? '#4c5656' : 'radial-gradient(ellipse 62% 72% at 52% 103%,#409a9a 0,#43878f 18%,#457896 42%,#4b6775 68%,#4c5656 100%)')};`;
const Crumbs = styled.div`display:flex;align-items:center;gap:4.500px;flex:none;height:14px;padding-left:8.500px;border-top:1px solid #d8dde2;background:linear-gradient(90deg,#4b5e80,#7488a4);color:#fff;font-size:5.700px;font-weight:500;`;
const Handle = styled.div`position:absolute;left:1px;top:92px;width:9px;height:34px;background:#fbeebd;color:#222;display:flex;align-items:center;line-height:0;`;
const Board = styled.div<{ $gap: number; $l: number; $t: number; $w: number }>`display:grid;grid-template-columns:repeat(3,${p => p.$w}px);column-gap:${p => p.$gap}px;padding:${p => p.$t}px 0 0 ${p => p.$l}px;align-items:start;`;
const Glow = css`border-radius:5px;overflow:hidden;background:#efefef;box-shadow:0 0 7px 1px rgba(23,170,185,.75),0 1px 2px #116b78;`;
const Kind = styled.article`${Glow}height:92px;`;
const KindHead = styled.h3<{ $c: string; $h?: number; $fs?: number }>`
  position:relative;margin:0;display:flex;align-items:center;justify-content:center;height:${p => p.$h || 37.5}px;background:${p => p.$c};color:#fff;font-size:${p => p.$fs || 14.9}px;font-weight:400;white-space:nowrap;
`;
const KindBody = styled.div`display:flex;align-items:center;justify-content:center;height:53px;`;
const red = '#ff6b6b', orange = '#ff8e3d', green = '#00e0bd', cyan = '#00bcd4';
const KindCard = ({ t, c }: { t: string; c: string }) => <Kind><KindHead $c={c}>{t}</KindHead><KindBody><PlusDot s={30} c={cyan} /></KindBody></Kind>;
const RulesChrome = ({ l, w }: { l: number; w: number }) => (
  <>
    <TopBand $h={23.5}><Swoosh /><Logo x={4} w={103} fs={16.7} /></TopBand>
    <MainNav l={l} w={w} h={21.5} fs={9.4} />
    <Crumbs><span>首頁</span><span>馬達管理</span><span>馬達參數設定</span></Crumbs>
    <Handle><ChevronsLeft size={10} strokeWidth={2.5} /></Handle>
  </>
);

const RulePanel = styled.div<{ $w: number; $fade?: number }>`
  ${Glow}position:relative;width:${p => p.$w}px;height:132.500px;color:#40567b;font-size:5.900px;overflow:visible;flex:none;
  ${p => p.$fade === 1 && css`&:after{content:'';position:absolute;inset:0;border-radius:5px;background:linear-gradient(90deg,rgba(85,88,88,.95),rgba(110,112,112,.68) 60%,rgba(140,140,140,.4))}`}
  ${p => p.$fade === 2 && css`&:after{content:'';position:absolute;inset:0;border-radius:5px;background:linear-gradient(90deg,rgba(110,112,112,.75),rgba(255,255,255,.2) 75%,rgba(255,255,255,0))}`}
`;
const PropRow = styled.div<{ $pl: number }>`display:flex;align-items:center;height:17.500px;padding-left:${p => p.$pl}px;border-bottom:1px solid #dcdcdc;>span:first-child{width:26px}`;
const CyanSelect = styled.span`position:relative;display:flex;align-items:center;justify-content:center;width:59px;height:10px;padding-right:10px;background:#00b4cf;color:#fff;font-size:5.700px;font-weight:500;white-space:nowrap;&:after{content:'';position:absolute;right:5px;top:3.500px;border:3px solid transparent;border-top:3.500px solid #fff;border-bottom:0}`;
const RuleLabel = styled.div<{ $pl: number }>`height:10px;padding:4px 0 0 ${p => p.$pl}px;`;
const RuleLine = styled.div<{ $pl: number }>`display:flex;align-items:center;height:26.200px;padding-left:${p => p.$pl}px;svg{overflow:visible}`;
const Dot = styled.i`width:5px;height:5px;border:1.500px solid #00a9c6;border-radius:50%;margin-right:2px;`;
const RuleName = styled.span<{ $w: number }>`width:${p => p.$w}px;white-space:nowrap;`;
type Rule = { n: string; w: number; at: number[]; seg: string[]; lab: string[]; nodes: string[] };
const Slider = ({ r }: { r: Rule }) => {
  const edges = [0, ...r.at, r.w];
  const four = r.at.length === 4;
  return (
    <svg width={r.w} height="26" viewBox={`0 0 ${r.w} 26`} fontSize="4.200" textAnchor="middle" fill="#666">
      {r.seg.map((c, i) => <path key={i} d={`M${edges[i]} 13H${edges[i + 1]}`} stroke={c} strokeWidth="1.700" />)}
      {r.lab.map((t, i) => <text key={i} x={(edges[i] + edges[i + 1]) / 2} y="10.500">{t}</text>)}
      {r.at.map((x, i) => (
        <g key={i}>
          <circle cx={x} cy="6" r="2.900" fill="#009fbd" /><path d={`M${x - 0.8} 4.500v3l2-1.500z`} fill="#fff" />
          <rect x={x - 1.7} y="11.300" width="3.400" height="3.400" fill={r.nodes[i]} stroke={r.nodes[i] === '#fff' ? cyan : 'none'} strokeWidth=".700" />
          <rect x={(four ? 10.5 + i * 18 : x) - 8.2} y="16.500" width="16.400" height="6" rx="1.500" fill="#e4e6f2" stroke="#8b93a8" strokeWidth=".600" />
          <text x={four ? 10.5 + i * 18 : x} y="21" fontSize="3.700">輸入數值</text>
        </g>
      ))}
    </svg>
  );
};
const N = '正常', A = '異常', W = '警戒';
const single: Rule[] = [
  { n: '超過', w: 60, at: [30], seg: [cyan, red], lab: [N, A], nodes: ['#fff'] },
  { n: '低於', w: 60, at: [30], seg: [red, cyan], lab: [A, N], nodes: [red] },
  { n: '範圍內', w: 60, at: [20, 40], seg: [red, cyan, red], lab: [A, N, A], nodes: [red, '#fff'] },
  { n: '範圍外', w: 60, at: [20, 40], seg: [cyan, red, cyan], lab: [N, A, N], nodes: [red, red] },
];
const multi: Rule[] = [
  { n: '超過', w: 60, at: [20, 40], seg: [cyan, orange, red], lab: [N, W, A], nodes: [orange, red] },
  { n: '低於', w: 60, at: [20, 40], seg: [red, orange, cyan], lab: [A, W, N], nodes: [orange, '#fff'] },
  { n: '範圍內', w: 75, at: [15, 30, 45, 60], seg: [red, orange, cyan, orange, red], lab: [A, W, N, W, A], nodes: [red, orange, orange, red] },
  { n: '範圍外', w: 75, at: [15, 30, 45, 60], seg: [cyan, orange, red, orange, cyan], lab: [N, W, A, W, N], nodes: ['#fff', orange, red, orange] },
];
const Hover = styled(Floating)`b{position:absolute;left:3px;top:-3px;padding:0 1px;background:#dfe3f2;color:#40567b;font-size:3.600px;font-weight:500;line-height:5px;white-space:nowrap}`;
const RuleCard = ({ w, rules, value, fade, close, hover, pl = 9 }: { w: number; rules: Rule[]; value: string; fade?: number; close?: boolean; hover?: boolean; pl?: number }) => (
  <RulePanel $w={w} $fade={fade}>
    <PropRow $pl={pl}><span>屬性</span><CyanSelect>{value}</CyanSelect></PropRow>
    <RuleLabel $pl={pl - 3}>規則</RuleLabel>
    {rules.map(r => <RuleLine key={r.n} $pl={pl + 0.5}><Dot /><RuleName $w={r.w === 75 ? 17.5 : 19.5}>{r.n}</RuleName><Slider r={r} /></RuleLine>)}
    {hover && <><Hover $x={67} $y={43}><Hand size={7} /><b>可選數值</b></Hover><Hover $x={69} $y={69}><Hand size={7} /><b>選數值</b></Hover></>}
    {close && <CloseDot $s={9} style={{ right: 1, top: 1, zIndex: 1 }}>×</CloseDot>}
  </RulePanel>
);

const RulesScreen = () => (
  <Rules $x={13} $w={674} $h={378} $mt={27}>
    <RulesChrome l={44} w={585} />
    <Board $w={187} $gap={19} $l={38} $t={14.5}><KindCard t="異常" c={red} /><KindCard t="警戒" c={orange} /><KindCard t="異常＆警戒" c={green} /></Board>
    <Foot h={21} l={225.5} />
  </Rules>
);

const RuleTray = styled.div`position:absolute;left:43px;top:128.500px;display:flex;gap:6.500px;`;
const NameCard = styled.div`${Glow}position:absolute;left:268.500px;top:75px;width:107px;height:47px;font-size:5.800px;color:#40567b;`;
const NameRow = styled.div<{ $h: number; $mt?: number }>`display:flex;align-items:center;height:${p => p.$h}px;margin-top:${p => p.$mt || 0}px;padding-left:5px;>span:first-child{width:27px}`;
const NameInput = styled.span`display:flex;align-items:center;justify-content:center;width:70px;height:10px;background:#e5e7f5;border:1px solid #8d93b5;border-radius:1.500px;`;
const Options = styled.div`position:absolute;left:305px;top:144.500px;width:59px;height:49px;padding-top:1px;background:#e5e8f4;border:1px solid #aab;font-size:6px;line-height:7.700px;font-weight:500;text-align:center;color:#334;`;
const Pager = styled.div`position:absolute;left:315px;top:276px;display:flex;gap:2px;i{width:3px;height:3px;border-radius:50%;background:#4c73a8}i:last-child{background:${cyan}}`;
const Note = styled.span`position:absolute;left:24px;top:27px;padding:1px;background:#e5e7f5;color:#556;font-size:3.300px;line-height:3.500px;white-space:nowrap;`;
const Act = styled(Floating)`>span:first-of-type{position:absolute;left:20px;top:32px}`;
const RuleModalScreen = () => (
  <Rules $x={15} $w={670} $h={377} $mt={11} $flat>
    <RulesChrome l={43.5} w={582} />
    <Board $w={136} $gap={14.5} $l={26} $t={15}><KindCard t="異常" c={red} /><KindCard t="警戒" c={orange} /><KindCard t="異常＆警戒" c={green} /></Board>
    <Foot h={21} l={224.5} />
    <Dimmer $b={21} $c="rgba(75,80,80,.72)" />
    <Floating $x={224.5} $y={354}><FootLogo $h={23}><BrandSvg w={56} /></FootLogo></Floating>
    <RuleTray>
      <RuleCard w={107} rules={single} value="CA相線電壓Vca" fade={1} close hover />
      <RuleCard w={107} rules={single} value="CA相線電壓Vca" fade={2} close hover />
      <RuleCard w={107} rules={single} value="選擇屬性" close />
    </RuleTray>
    <NameCard>
      <KindHead $c={red} $h={15} $fs={8.6}>異常<CloseDot $s={9}>×</CloseDot></KindHead>
      <NameRow $h={15} $mt={2}><span>規則名稱</span><NameInput>過高異常通知</NameInput></NameRow>
      <NameRow $h={13}><span>裝置</span><CyanSelect>測試異常馬達</CyanSelect></NameRow>
    </NameCard>
    <Options>{[1, 2, 3, 4, 5, 6].map(i => <div key={i}>CA相線電壓Vca</div>)}</Options>
    <Act $x={381.5} $y={157}><PlusDot s={30} c={cyan} /><span style={{ top: 24 }}><Hand size={6} /></span><Note>新增屬性</Note></Act>
    <Act $x={381.5} $y={194}><svg width="30" height="30" viewBox="0 0 30 30"><circle cx="15" cy="15" r="15" fill={cyan} /><path d="M6 15l6 6.500L24 8" fill="none" stroke="#fff" strokeWidth="4" /></svg><span style={{ top: 24 }}><Hand size={6} /></span><Note>確定儲存</Note></Act>
    <Pager><i /><i /><i /></Pager>
  </Rules>
);

const Column = styled.div`display:flex;flex-direction:column;gap:10px;margin-top:-1.500px;`;
const Detail = styled.article`${Glow}height:85px;color:#555;`;
const DetailTop = styled.div`display:flex;align-items:center;height:16px;padding-left:19px;border-bottom:1px solid #ccc;font-size:4.600px;b{font-size:6px;font-weight:500;color:#40567b}span{width:78px;white-space:nowrap}`;
const DetailGrid = styled.div`display:grid;grid-template-columns:80px 1fr;row-gap:3px;padding:6px 0 0 19px;font-size:4.600px;line-height:6.500px;white-space:nowrap;b{font-size:5.800px;font-weight:500;color:#40567b}span{padding-left:18px}`;
const PanelSlot = styled.div`position:absolute;left:316px;top:185px;`;
const DetailItem = ({ extra, a, b }: { extra?: string; a: string; b: string }) => <div><b>屬性：</b>CA相線電壓Vca{extra}<br /><b>規則：</b>{a}<br /><span>{b}</span></div>;
const RulesDetailScreen = () => (
  <Rules $x={14} $w={672} $h={378} $mt={13}>
    <RulesChrome l={43.5} w={583} />
    <Board $w={186.5} $gap={19} $l={38} $t={18}>
      <KindCard t="異常" c={red} /><KindCard t="警戒" c={orange} />
      <Column>
        <Detail>
          <KindHead $c={green} $h={15} $fs={8.8}>異常＆警戒<CloseDot $s={9}>×</CloseDot></KindHead>
          <DetailTop><span><b>規則名稱：</b>過高警戒異常通知</span><span><b>裝置：</b>測試異常馬達</span></DetailTop>
          <DetailGrid>
            <DetailItem a="超過 5以上 警戒;" b="超過 8以上 異常" />
            <DetailItem extra="_33" a="範圍外 3以外 到 20以下 警戒;" b="8以外 到 15以下 異常" />
            <DetailItem a="超過 5以上 警戒;" b="超過 8以上 異常" />
            <DetailItem extra="_33" a="範圍外 3以外 到 20以下 警戒;" b="8以外 到 15以下 異常" />
          </DetailGrid>
        </Detail>
        <KindCard t="異常＆警戒" c={green} />
      </Column>
    </Board>
    <PanelSlot><RuleCard w={116} rules={multi} value="選擇屬性" pl={10} /></PanelSlot>
    <Foot h={22} l={224.5} />
  </Rules>
);

export default function App() {
  return (
    <>
      <Global />
      <Page>
        <Dashboard />
        <AnalysisScreen />
        <EquipScreen />
        <ModalScreen />
        <RulesScreen />
        <RuleModalScreen />
        <RulesDetailScreen />
        <PageRule />
      </Page>
    </>
  );
}
